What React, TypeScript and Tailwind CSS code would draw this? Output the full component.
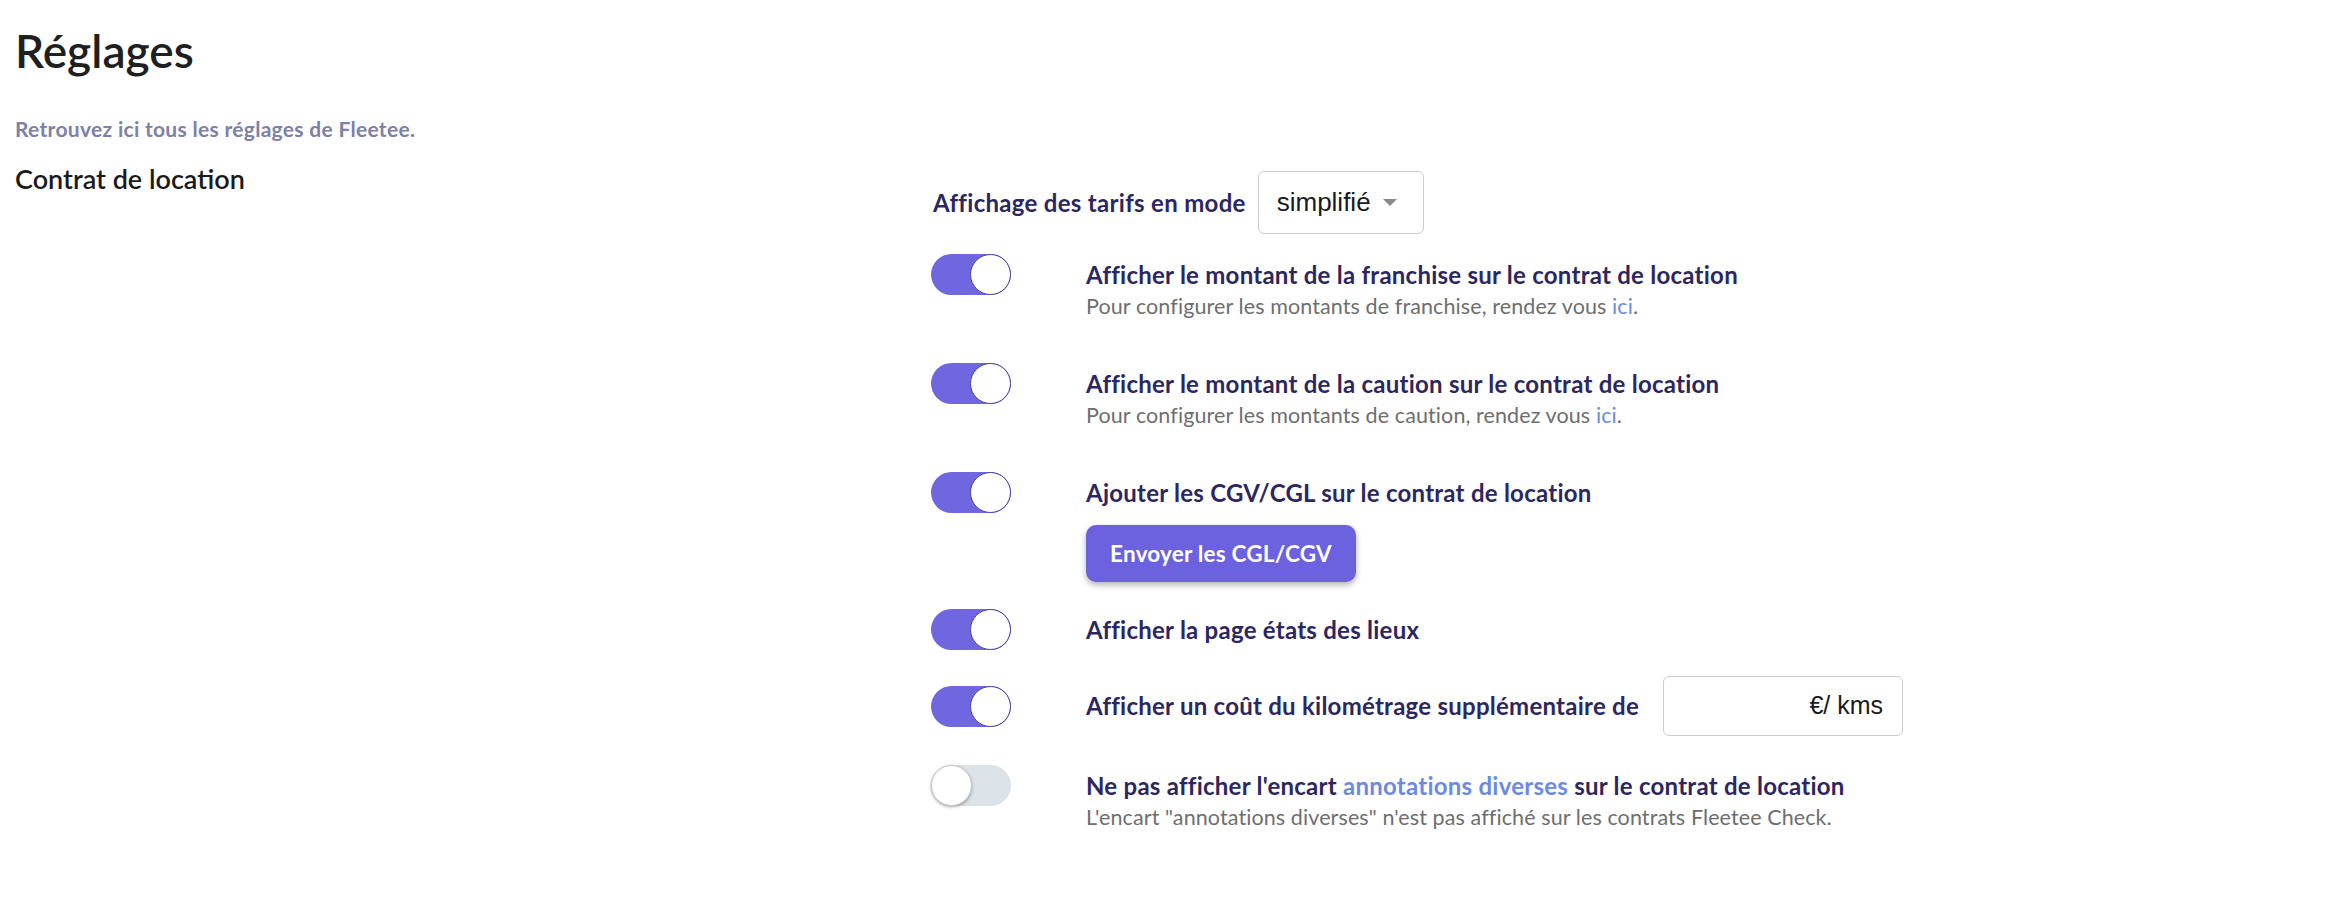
import React from "react";

const font = { fontFamily: "Lato, 'Noto Sans', sans-serif" };

function Toggle({ on }: { on: boolean }) {
  return (
    <div
      className={`relative shrink-0 w-[80px] h-[41px] rounded-full ${
        on ? "bg-[#6f66e0]" : "bg-[#dce3e8]"
      }`}
    >
      <div
        className={`absolute top-0 w-[41px] h-[41px] rounded-full bg-white ${
          on
            ? "right-0 border border-[#4a429e]"
            : "left-0 border border-[#c9c9c9] shadow-[0_1px_3px_rgba(0,0,0,0.35)]"
        }`}
      />
    </div>
  );
}

function Row({
  on,
  className = "",
  children,
}: {
  on: boolean;
  className?: string;
  children: React.ReactNode;
}) {
  return (
    <div className={`flex items-start gap-[75px] ${className}`}>
      <Toggle on={on} />
      <div className="flex flex-col">{children}</div>
    </div>
  );
}

const label = "text-[24px] leading-[41px] font-bold tracking-[0.25px]";
const sub = "-mt-[2px] text-[21.5px] leading-[26px] text-[#6e6e6e] tracking-[0.1px]";

export default function App() {
  return (
    <main className="min-h-screen bg-white px-[15px] pt-[26px]" style={font}>
      <h1 className="text-[46px] leading-[50px] font-semibold text-[#1f1f1f]">
        Réglages
      </h1>
      <p className="mt-[41px] text-[21px] leading-[24px] font-bold text-[#7d80a8] tracking-[0.3px]">
        Retrouvez ici tous les réglages de Fleetee.
      </p>

      <div className="flex mt-[23px]">
        <h2 className="w-[916px] shrink-0 text-[27px] leading-[30px] font-semibold text-[#1a1a1a]">
          Contrat de location
        </h2>

        <div className="flex flex-col pt-[7px] text-[#2c2760]">
          <div className="flex items-center gap-[12px] pl-[2px]">
            <span className="text-[24px] font-bold tracking-[0.3px]">
              Affichage des tarifs en mode
            </span>
            <div
              className="flex items-center gap-[12px] h-[63px] w-[166px] px-[18px] rounded-[6px] border border-[#cccccc] bg-white"
              style={{ fontFamily: "'Liberation Sans', Arial, sans-serif" }}
            >
              <span className="text-[26px] text-[#1a1a1a]">simplifié</span>
              <span className="w-0 h-0 border-l-[7px] border-r-[7px] border-t-[7px] border-l-transparent border-r-transparent border-t-[#8a8a8a]" />
            </div>
          </div>

          <Row on className="mt-[20px]">
            <span className={label}>
              Afficher le montant de la franchise sur le contrat de location
            </span>
            <span className={sub}>
              Pour configurer les montants de franchise, rendez vous{" "}
              <span className="text-[#6c8ae4]">ici</span>.
            </span>
          </Row>

          <Row on className="mt-[44px]">
            <span className={label}>
              Afficher le montant de la caution sur le contrat de location
            </span>
            <span className={sub}>
              Pour configurer les montants de caution, rendez vous{" "}
              <span className="text-[#6c8ae4]">ici</span>.
            </span>
          </Row>

          <Row on className="mt-[44px]">
            <span className={label}>
              Ajouter les CGV/CGL sur le contrat de location
            </span>
            <button className="mt-[12px] w-[270px] h-[57px] rounded-[10px] bg-[#6c62e0] text-white text-[22.5px] font-bold tracking-[0.2px] shadow-[0_3px_6px_rgba(0,0,0,0.3)]">
              Envoyer les CGL/CGV
            </button>
          </Row>

          <Row on className="mt-[27px]">
            <span className={label}>Afficher la page états des lieux</span>
          </Row>

          <div className="flex items-center gap-[75px] mt-[26px]">
            <Toggle on />
            <div className="flex items-center gap-[24px]">
              <span className="text-[24px] font-bold tracking-[0.25px]">
                Afficher un coût du kilométrage supplémentaire de
              </span>
              <div
                className="flex items-center justify-end h-[60px] w-[240px] pr-[19px] rounded-[6px] border border-[#cccccc] text-[25px] text-[#1a1a1a]"
                style={{ fontFamily: "'Liberation Sans', Arial, sans-serif" }}
              >
                €/ kms
              </div>
            </div>
          </div>

          <Row on={false} className="mt-[29px]">
            <span className={label}>
              Ne pas afficher l'encart{" "}
              <span className="text-[#6c8ae4]">annotations diverses</span> sur
              le contrat de location
            </span>
            <span className={sub}>
              L'encart "annotations diverses" n'est pas affiché sur les contrats
              Fleetee Check.
            </span>
          </Row>
        </div>
      </div>
    </main>
  );
}
